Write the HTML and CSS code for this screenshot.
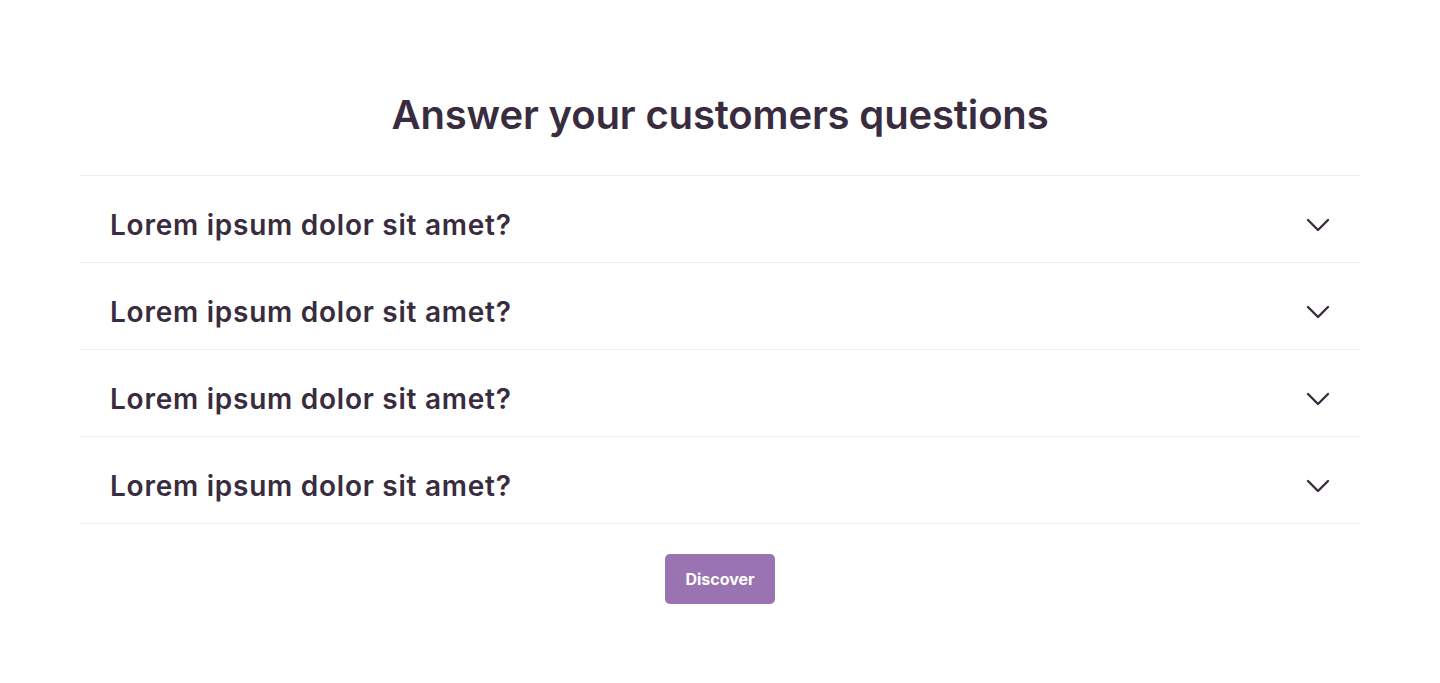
FILE: index.html
```html
<!DOCTYPE html>
<html lang="en">
<head>
<meta charset="utf-8">
<title>FAQ</title>
<link rel="stylesheet" href="styles.css">
</head>
<body>
<section class="faq">
  <h1 class="faq-title">Answer your customers questions</h1>
  <ul class="faq-list">
    <li class="faq-item">
      <span class="faq-question">Lorem ipsum dolor sit amet?</span>
      <svg class="chevron" viewBox="0 0 24 14" width="24" height="14" aria-hidden="true"><path d="M2 2 L12 12 L22 2" fill="none" stroke="currentColor" stroke-width="2.4" stroke-linecap="round" stroke-linejoin="round"/></svg>
    </li>
    <li class="faq-item">
      <span class="faq-question">Lorem ipsum dolor sit amet?</span>
      <svg class="chevron" viewBox="0 0 24 14" width="24" height="14" aria-hidden="true"><path d="M2 2 L12 12 L22 2" fill="none" stroke="currentColor" stroke-width="2.4" stroke-linecap="round" stroke-linejoin="round"/></svg>
    </li>
    <li class="faq-item">
      <span class="faq-question">Lorem ipsum dolor sit amet?</span>
      <svg class="chevron" viewBox="0 0 24 14" width="24" height="14" aria-hidden="true"><path d="M2 2 L12 12 L22 2" fill="none" stroke="currentColor" stroke-width="2.4" stroke-linecap="round" stroke-linejoin="round"/></svg>
    </li>
    <li class="faq-item">
      <span class="faq-question">Lorem ipsum dolor sit amet?</span>
      <svg class="chevron" viewBox="0 0 24 14" width="24" height="14" aria-hidden="true"><path d="M2 2 L12 12 L22 2" fill="none" stroke="currentColor" stroke-width="2.4" stroke-linecap="round" stroke-linejoin="round"/></svg>
    </li>
  </ul>
  <div class="faq-actions">
    <a class="btn" href="#">Discover</a>
  </div>
</section>
</body>
</html>
```
FILE: styles.css
```css
html, body {
  margin: 0;
  padding: 0;
  background: #ffffff;
}
body {
  font-family: "Inter", "Noto Sans", sans-serif;
  color: #392c3f;
}
.faq {
  width: 1280px;
  margin: 0 auto;
  padding-top: 91px;
}
.faq-title {
  margin: 0 0 36px;
  font-size: 40px;
  line-height: 48px;
  font-weight: 600;
  text-align: center;
  letter-spacing: -0.15px;
}
.faq-list {
  list-style: none;
  margin: 0;
  padding: 0;
  border-top: 1px solid #eceef1;
}
.faq-item {
  display: flex;
  align-items: center;
  justify-content: space-between;
  height: 74px;
  padding: 12px 30px 0;
  border-bottom: 1px solid #eceef1;
}
.faq-question {
  font-size: 28px;
  font-weight: 600;
  line-height: 36px;
  letter-spacing: 0.75px;
}
.chevron {
  display: block;
  color: #392c3f;
}
.faq-actions {
  display: flex;
  justify-content: center;
  padding-top: 30px;
}
.btn {
  display: flex;
  align-items: center;
  justify-content: center;
  width: 110px;
  height: 50px;
  border-radius: 5px;
  background: #9a73b2;
  color: #ffffff;
  font-size: 16px;
  font-weight: 700;
  text-decoration: none;
}
```
